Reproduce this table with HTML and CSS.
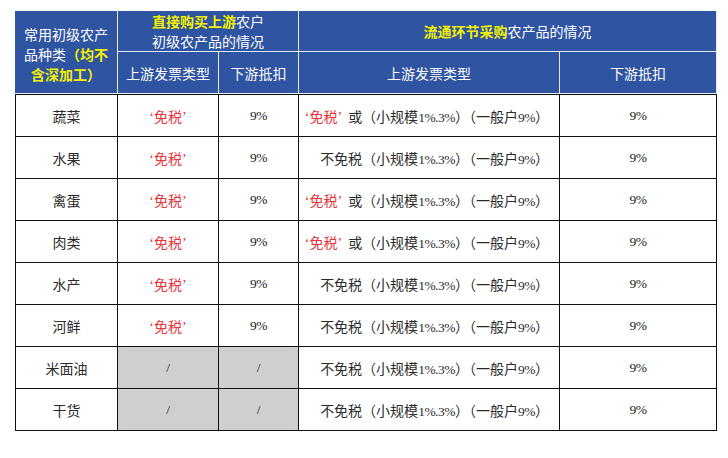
FILE: index.html
```html
<!DOCTYPE html>
<html lang="zh-CN">
<head>
<meta charset="utf-8">
<link rel="stylesheet" href="styles.css">
</head>
<body>
<div class="wrap">
<table class="grid">
  <colgroup>
    <col class="c1"><col class="c2"><col class="c3"><col class="c4"><col class="c5">
  </colgroup>
  <thead>
    <tr class="h1">
      <th rowspan="2" class="hcat">常用初级农产<br>品种类<span class="y">（均不<br>含深加工）</span></th>
      <th colspan="2"><span class="y">直接购买上游</span>农户<br>初级农产品的情况</th>
      <th colspan="2"><span class="y">流通环节采购</span>农产品的情况</th>
    </tr>
    <tr class="h2">
      <th>上游发票类型</th>
      <th>下游抵扣</th>
      <th>上游发票类型</th>
      <th>下游抵扣</th>
    </tr>
  </thead>
  <tbody>
    <tr class="first">
      <td>蔬菜</td><td class="red">‘免税’</td><td class="num">9%</td>
      <td class="ctype"><span class="red tag">‘免税’</span>或（小规模<span class="lat">1%.3%</span>）（一般户<span class="lat">9%</span>）</td><td class="num">9%</td>
    </tr>
    <tr>
      <td>水果</td><td class="red">‘免税’</td><td class="num">9%</td>
      <td class="ctype">不免税（小规模<span class="lat">1%.3%</span>）（一般户<span class="lat">9%</span>）</td><td class="num">9%</td>
    </tr>
    <tr>
      <td>禽蛋</td><td class="red">‘免税’</td><td class="num">9%</td>
      <td class="ctype"><span class="red tag">‘免税’</span>或（小规模<span class="lat">1%.3%</span>）（一般户<span class="lat">9%</span>）</td><td class="num">9%</td>
    </tr>
    <tr>
      <td>肉类</td><td class="red">‘免税’</td><td class="num">9%</td>
      <td class="ctype"><span class="red tag">‘免税’</span>或（小规模<span class="lat">1%.3%</span>）（一般户<span class="lat">9%</span>）</td><td class="num">9%</td>
    </tr>
    <tr>
      <td>水产</td><td class="red">‘免税’</td><td class="num">9%</td>
      <td class="ctype">不免税（小规模<span class="lat">1%.3%</span>）（一般户<span class="lat">9%</span>）</td><td class="num">9%</td>
    </tr>
    <tr>
      <td>河鲜</td><td class="red">‘免税’</td><td class="num">9%</td>
      <td class="ctype">不免税（小规模<span class="lat">1%.3%</span>）（一般户<span class="lat">9%</span>）</td><td class="num">9%</td>
    </tr>
    <tr>
      <td>米面油</td><td class="gray num">/</td><td class="gray num">/</td>
      <td class="ctype">不免税（小规模<span class="lat">1%.3%</span>）（一般户<span class="lat">9%</span>）</td><td class="num">9%</td>
    </tr>
    <tr>
      <td>干货</td><td class="gray num">/</td><td class="gray num">/</td>
      <td class="ctype">不免税（小规模<span class="lat">1%.3%</span>）（一般户<span class="lat">9%</span>）</td><td class="num">9%</td>
    </tr>
  </tbody>
</table>
</div>
</body>
</html>
```

FILE: styles.css
```css
html, body {
  margin: 0;
  padding: 0;
  background: #fff;
}

.wrap {
  padding: 11px 0 0 15px;
}

.grid {
  border-collapse: separate;
  border-spacing: 0;
  table-layout: fixed;
  width: 702px;
  font-family: "Liberation Serif", "Noto Sans CJK SC", serif;
  font-size: 14px;
  color: #333;
}

.c1 { width: 103px; }
.c2 { width: 101px; }
.c3 { width: 80px; }
.c4 { width: 261px; }
.c5 { width: 157px; }

.grid th {
  background: #2f54a1;
  color: #fff;
  font-family: "Noto Sans CJK SC", sans-serif;
  font-weight: 400;
  font-size: 14px;
  line-height: 20px;
  padding: 0;
  text-align: center;
  vertical-align: middle;
  border-right: 1px solid #e6ecf7;
  border-bottom: 1px solid #e6ecf7;
}

.grid .h1 th { height: 40px; }
.grid .h2 th { height: 41px; }

.grid th.hcat {
  padding-top: 4px;
}

.y {
  color: #f4f000;
  font-weight: 700;
}

.grid td {
  height: 41px;
  padding: 0;
  text-align: center;
  vertical-align: middle;
  border-right: 1px solid #111;
  border-bottom: 1px solid #111;
  font-family: "Liberation Serif", "Noto Sans CJK SC", serif;
  font-weight: 400;
  font-size: 14px;
  color: #2b2b2b;
  white-space: nowrap;
}

.grid td:first-child { border-left: 1px solid #111; }
.grid tr.first td { border-top: 1px solid #111; }

.grid td.num {
  font-family: "Liberation Serif", serif;
  font-size: 13.5px;
  letter-spacing: -0.5px;
  color: #222;
}

.lat {
  font-family: "Liberation Serif", serif;
  font-size: 13.5px;
  letter-spacing: -0.5px;
}

.grid td.ctype {
  text-align: right;
  padding-right: 10px;
}

.tag {
  margin-right: 6px;
}

.red { color: #e8333a; }
.grid td.red { color: #e8333a; }

.grid td.gray { background: #d0cece; }
```
